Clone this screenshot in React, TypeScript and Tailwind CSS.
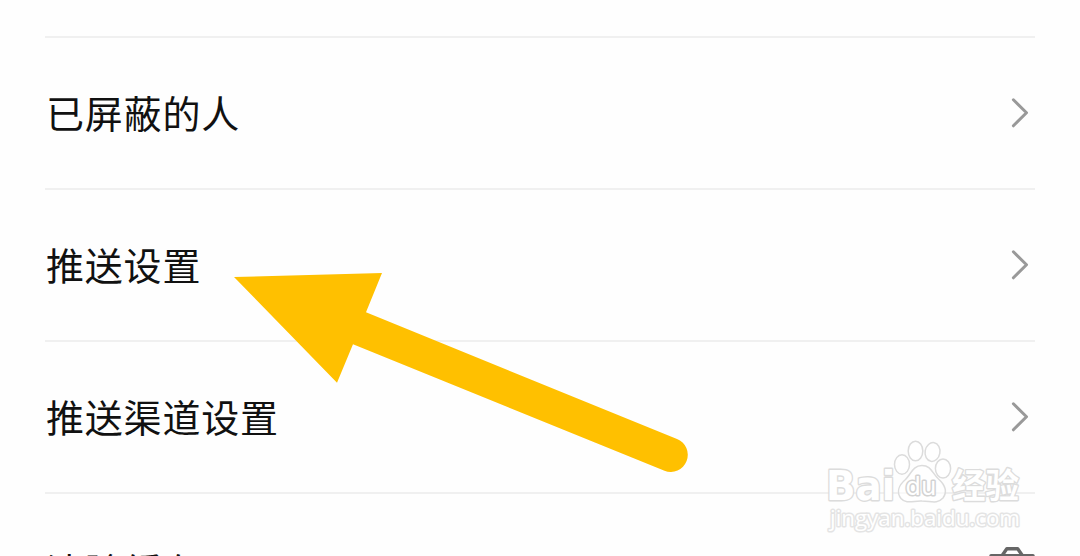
type RowProps = { label: string; chevron?: boolean };

function Chevron() {
  return (
    <svg className="mr-1.5 h-8 w-5" viewBox="0 0 20 32" fill="none" stroke="#999999" strokeWidth="3" strokeLinecap="round" strokeLinejoin="round">
      <path d="M4.4 2.8 17.5 15.8 4.4 28.8" />
    </svg>
  );
}

function CacheIcon() {
  return (
    <svg className="h-12 w-[46px]" viewBox="0 0 46 48" fill="none" stroke="#666666" strokeWidth="3.4" strokeLinejoin="round" strokeLinecap="round">
      <path d="M2 10.6H44" />
      <path d="M13.5 10 17.8 3.8H28.7L33 10" />
      <path d="M6 12V42H40V12" />
    </svg>
  );
}

function Row({ label, chevron = true }: RowProps) {
  return (
    <div className="flex h-[152px] shrink-0 items-center justify-between border-t-2 border-[#f0f0f0]">
      <span className={`${chevron ? "pb-0.5" : "pt-0.5"} pl-px text-[38px] leading-[56px] tracking-[0.8px] text-[#111111]`}>{label}</span>
      {chevron ? <Chevron /> : <CacheIcon />}
    </div>
  );
}

function Arrow() {
  return (
    <svg className="pointer-events-none absolute inset-0 h-full w-full" viewBox="0 0 1080 556">
      <path d="M234 277 382 273 366 312.3 677 439A17 17 0 0 1 664.5 470.7L353 344.2 337 382.7Z" fill="#ffc000" />
    </svg>
  );
}

function Watermark() {
  return (
    <svg className="pointer-events-none absolute top-[430px] left-[815px] h-[110px] w-[220px]" viewBox="0 0 220 110" fill="#ffffff" stroke="#dcdcdc" strokeWidth="1.5" strokeLinejoin="round">
      <text x="11" y="70" fontFamily="'DejaVu Sans', sans-serif" fontSize="41" fontWeight="700" textLength="69" lengthAdjust="spacingAndGlyphs" paintOrder="stroke" strokeWidth="2.8">Bai</text>
      <text x="137" y="68" fontFamily="'Noto Sans CJK SC', sans-serif" fontSize="34" fontWeight="700" textLength="67" lengthAdjust="spacingAndGlyphs" paintOrder="stroke" strokeWidth="2.8">经验</text>
      <g fillOpacity="0.6">
        <ellipse cx="87" cy="34.5" rx="7.5" ry="9.7" />
        <ellipse cx="100.5" cy="21" rx="7.3" ry="9.8" />
        <ellipse cx="117.5" cy="22" rx="7.4" ry="9.5" transform="rotate(10 117.5 22)" />
        <ellipse cx="128" cy="38.5" rx="7.6" ry="9.6" />
        <path d="M107 35.5C98 35.5 96 44 90.5 49.5C84 55 81 62 86 68.5C91 74.5 99 70.5 107 71C116 71 122 74.5 128 68C133 61 129 54 123.5 49C117 43 116 35.5 107 35.5Z" />
      </g>
      <text x="90.5" y="64.5" fontFamily="'DejaVu Sans', sans-serif" fontSize="24" textLength="31" lengthAdjust="spacingAndGlyphs" paintOrder="stroke" stroke="#d2d2d2" strokeWidth="3">du</text>
      <text x="15" y="96" fontFamily="'Open Sans', 'Noto Sans', sans-serif" fontSize="22" textLength="190" lengthAdjust="spacingAndGlyphs" paintOrder="stroke" stroke="#e4e4e4" strokeWidth="3">jingyan.baidu.com</text>
    </svg>
  );
}

export default function App() {
  return (
    <main className="relative h-[556px] w-[1080px] overflow-hidden bg-[#fefefe] font-['Noto_Sans_CJK_SC',sans-serif]">
      <div className="flex flex-col px-[45px] pt-9">
        <Row label="已屏蔽的人" />
        <Row label="推送设置" />
        <Row label="推送渠道设置" />
        <Row label="清除缓存" chevron={false} />
      </div>
      <Arrow />
      <Watermark />
    </main>
  );
}
